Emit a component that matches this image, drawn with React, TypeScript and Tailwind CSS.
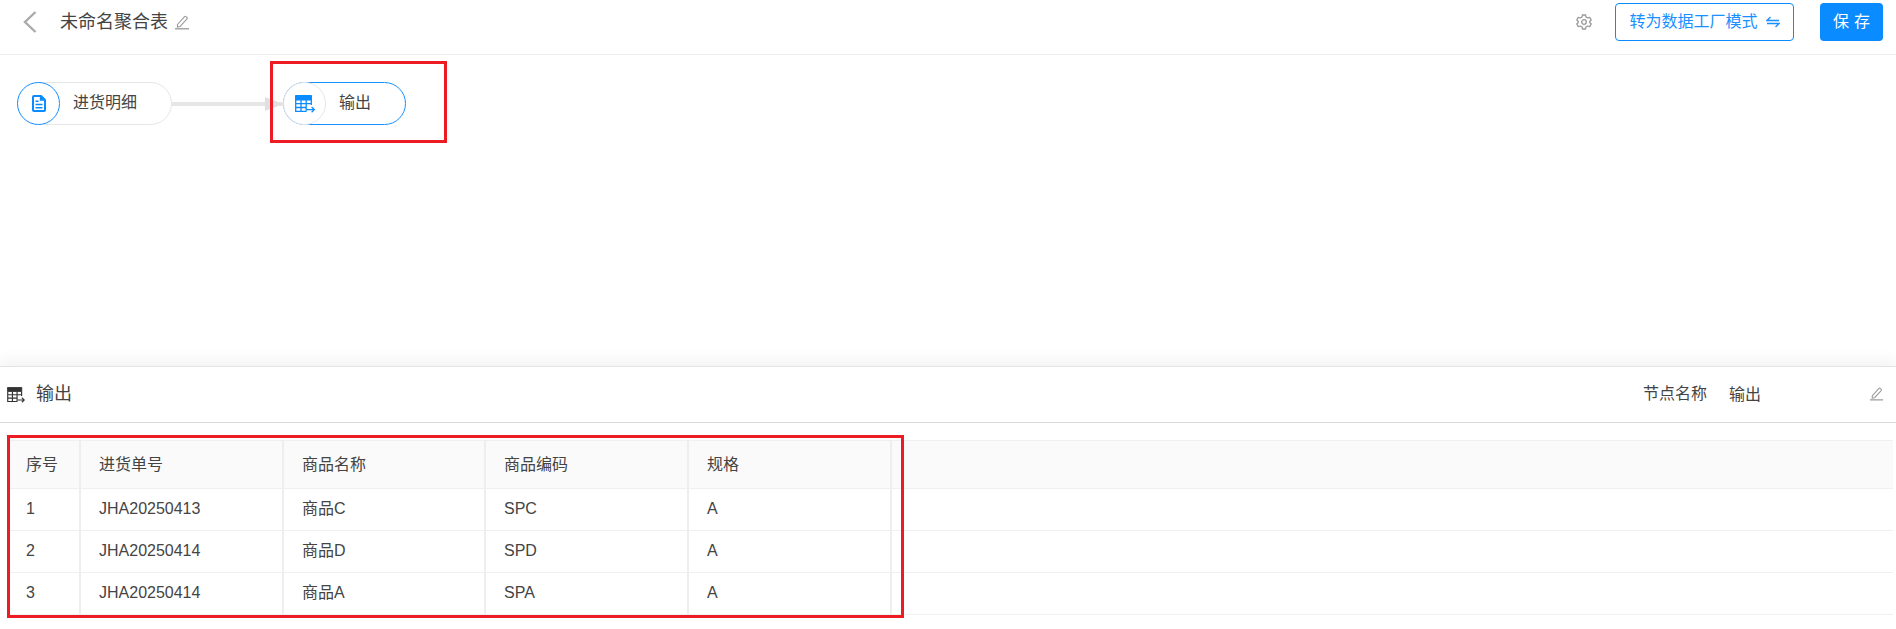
const FONT = "font-['Liberation_Sans','Noto_Sans_CJK_SC',sans-serif]"

const COLUMNS = ['序号', '进货单号', '商品名称', '商品编码', '规格']

const ROWS = [
  ['1', 'JHA20250413', '商品C', 'SPC', 'A'],
  ['2', 'JHA20250414', '商品D', 'SPD', 'A'],
  ['3', 'JHA20250414', '商品A', 'SPA', 'A'],
]

function EditIcon({ className }: { className?: string }) {
  return (
    <svg viewBox="0 0 16 16" fill="none" stroke="currentColor" strokeWidth="1.1" className={className}>
      <path d="M3.5 10.500 10.600 2.600a1 1 0 0 1 1.400 0l1 .9a1 1 0 0 1 0 1.400l-7 7.600-2.600.5z" />
      <path d="M1 14.800h14" strokeWidth="1.300" />
    </svg>
  )
}

function TableIcon({ className }: { className?: string }) {
  return (
    <svg viewBox="0 0 20 18" fill="none" stroke="currentColor" className={className}>
      <path d="M.5.5h16v4.500H.5z" fill="currentColor" strokeWidth="1" />
      <path d="M.7 5v11.300h10.800M16.300 5v5M.7 8.700h15.600M.7 12.500h11M6 5v11.300M11.200 5v11.300" strokeWidth="1.300" />
      <path d="M12 14.600h7M16.600 12l2.700 2.600-2.700 2.600" strokeWidth="1.300" />
    </svg>
  )
}

function DocIcon({ className }: { className?: string }) {
  return (
    <svg viewBox="0 0 14 17" className={className}>
      <path d="M2 0h7.500L14 4.500V15a2 2 0 0 1-2 2H2a2 2 0 0 1-2-2V2a2 2 0 0 1 2-2z" fill="currentColor" />
      <path d="M2 2h5.800v3.800h4.200V15H2z" fill="#fff" />
      <path d="M3.500 6.300h3M3.500 9.500h7M3.500 12.700h7" stroke="currentColor" strokeWidth="1.600" />
    </svg>
  )
}

function GearIcon({ className }: { className?: string }) {
  return (
    <svg viewBox="0 0 16 16" fill="none" stroke="currentColor" strokeWidth="1.300" className={className}>
      <path d="M6.500 1h3l.5 2 1.700 1 2-.6 1.500 2.600-1.500 1.400v1.200l1.500 1.400-1.500 2.600-2-.6-1.700 1-.5 2h-3l-.5-2-1.700-1-2 .6-1.500-2.600 1.500-1.400v-1.200l-1.500-1.400 1.500-2.600 2 .6 1.700-1z" strokeLinejoin="round" />
      <circle cx="8" cy="8" r="2.300" />
    </svg>
  )
}

function SwapIcon({ className }: { className?: string }) {
  return (
    <svg viewBox="0 0 14 12" fill="none" stroke="currentColor" strokeWidth="1.300" className={className}>
      <path d="M13 4.500H1L4.500 1M1 7.500h12L9.500 11" />
    </svg>
  )
}

function Header() {
  return (
    <header className="h-[55px] border-b border-[#eeeeee] flex items-center pb-[10px] shrink-0">
      <svg viewBox="0 0 14 22" fill="none" stroke="#aaaaaa" strokeWidth="2.400" className="w-[14px] h-[22px] ml-[23px]">
        <path d="M12.500 1 2 11l10.500 10" />
      </svg>
      <span className="ml-[23px] text-[18px] leading-[24px] text-[#444444]">未命名聚合表</span>
      <EditIcon className="ml-[6px] w-[16px] h-[16px] text-[#999999]" />
      <div className="ml-auto flex items-center">
        <GearIcon className="w-[16px] h-[16px] text-[#999999]" />
        <button className="ml-[23px] w-[179px] h-[38px] border border-[#0a8bff] rounded-[4px] text-[#1890ff] text-[16px] flex items-center justify-center gap-[8px]">
          转为数据工厂模式
          <SwapIcon className="w-[14px] h-[12px]" />
        </button>
        <button className="ml-[26px] mr-[13px] w-[63px] h-[38px] bg-[#0a8bff] rounded-[4px] text-white text-[16px] tracking-[5px] pl-[5px]">
          保存
        </button>
      </div>
    </header>
  )
}

function Node({ label, icon, active, width }: { label: string; icon: React.ReactNode; active?: boolean; width: string }) {
  return (
    <div
      className={`${width} h-[43px] rounded-full border flex items-center ${
        active ? 'border-[#1890ff]' : 'border-[#e6e6e6]'
      }`}
    >
      <div
        className={`w-[43px] h-[43px] -ml-px rounded-full border flex items-center justify-center shrink-0 bg-white ${
          active ? 'border-[#e6e6e6]' : 'border-[#1890ff]'
        }`}
      >
        {icon}
      </div>
      <span className="ml-[13px] pb-[2px] text-[16px] text-[#444444]">{label}</span>
    </div>
  )
}

function Canvas() {
  return (
    <section className="relative flex-1 pt-[27px] pl-[17px] bg-white">
      <div className="flex items-center">
        <Node label="进货明细" width="w-[155px]" icon={<DocIcon className="w-[14px] h-[17px] text-[#0a8bff]" />} />
        <div className="w-[111px] relative h-[4px] bg-[#e6e6e6]">
          <span className="absolute right-0 top-[-5px] border-y-[7px] border-y-transparent border-l-[18px] border-l-[#e0e0e0]" />
        </div>
        <Node label="输出" active width="w-[123px]" icon={<TableIcon className="w-[20px] h-[18px] text-[#0a8bff]" />} />
      </div>
    </section>
  )
}

function DataTable() {
  return (
    <table className="table-fixed border-collapse w-[1883px] ml-[10px] mt-[17px] text-[16px] text-[#444444]">
      <colgroup>
        <col className="w-[70px]" />
        <col className="w-[203px]" />
        <col className="w-[202px]" />
        <col className="w-[203px]" />
        <col className="w-[203px]" />
        <col />
      </colgroup>
      <thead>
        <tr className="h-[48px] bg-[#fafafa] border-y border-[#f0f0f0]">
          {COLUMNS.map((col, i) => (
            <th key={col} className={`font-normal text-left border-r-2 border-[#eeeeee] ${i === 0 ? 'pl-[16px]' : 'pl-[18px]'}`}>
              {col}
            </th>
          ))}
          <th />
        </tr>
      </thead>
      <tbody>
        {ROWS.map((row) => (
          <tr key={row[0]} className="h-[42px] border-b border-[#f0f0f0]">
            {row.map((cell, i) => (
              <td key={i} className={`border-r-2 border-[#eeeeee] pb-[2px] ${i === 0 ? 'pl-[16px]' : 'pl-[18px]'}`}>
                {cell}
              </td>
            ))}
            <td />
          </tr>
        ))}
      </tbody>
    </table>
  )
}

function BottomPanel() {
  return (
    <section className="relative h-[263px] shrink-0 bg-white border-t border-[#e4e4e4] shadow-[0_-6px_14px_rgba(0,0,0,0.05)]">
      <div className="h-[56px] border-b border-[#d9d9d9] flex items-center">
        <TableIcon className="ml-[7px] w-[18px] h-[16px] text-[#333333]" />
        <span className="ml-[11px] text-[18px] text-[#444444]">输出</span>
        <div className="ml-auto flex items-center text-[16px] text-[#444444]">
          <span className="pb-[1px]">节点名称</span>
          <span className="ml-[22px] w-[140px] pt-[1px]">输出</span>
          <EditIcon className="mr-[12px] mb-[2px] w-[15px] h-[15px] text-[#999999]" />
        </div>
      </div>
      <DataTable />
    </section>
  )
}

export default function App() {
  return (
    <div className={`relative h-[629px] overflow-hidden bg-white flex flex-col ${FONT}`}>
      <Header />
      <Canvas />
      <BottomPanel />
      {/* annotation boxes drawn over the screenshot */}
      <div className="absolute left-[270px] top-[61px] w-[177px] h-[82px] border-[3px] border-[#ed1c24]" />
      <div className="absolute left-[7px] top-[435px] w-[897px] h-[183px] border-[3px] border-[#ed1c24]" />
    </div>
  )
}
